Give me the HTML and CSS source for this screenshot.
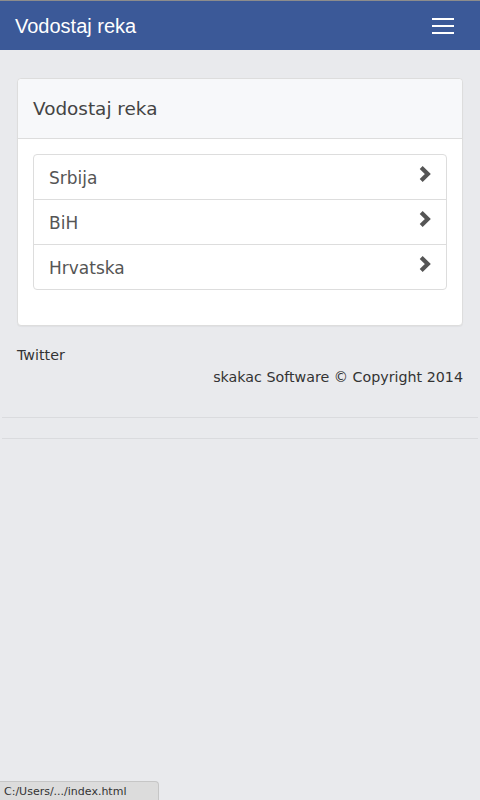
FILE: index.html
```html
<!DOCTYPE html>
<html>
<head>
<meta charset="utf-8">
<title>Vodostaj reka</title>
<link rel="stylesheet" href="styles.css">
</head>
<body>
<header class="topbar">
  <div class="brand">Vodostaj reka</div>
  <button class="menu-btn" aria-label="Menu">
    <span class="bar"></span><span class="bar"></span><span class="bar"></span>
  </button>
</header>
<main class="container">
  <section class="panel">
    <div class="panel-heading">Vodostaj reka</div>
    <div class="panel-body">
      <ul class="list-group">
        <li class="list-item"><span>Srbija</span>
          <svg class="chev" width="12" height="16" viewBox="0 0 12 16"><polyline points="2.2,1.6 8.8,8 2.2,14.4" fill="none" stroke="#555" stroke-width="4.2"/></svg>
        </li>
        <li class="list-item"><span>BiH</span>
          <svg class="chev" width="12" height="16" viewBox="0 0 12 16"><polyline points="2.2,1.6 8.8,8 2.2,14.4" fill="none" stroke="#555" stroke-width="4.2"/></svg>
        </li>
        <li class="list-item"><span>Hrvatska</span>
          <svg class="chev" width="12" height="16" viewBox="0 0 12 16"><polyline points="2.2,1.6 8.8,8 2.2,14.4" fill="none" stroke="#555" stroke-width="4.2"/></svg>
        </li>
      </ul>
    </div>
  </section>
  <footer class="footer">
    <div class="twitter">Twitter</div>
    <div class="copyright">skakac Software © Copyright 2014</div>
  </footer>
</main>
<hr class="rule rule-first">
<hr class="rule">
<div class="status">C:/Users/.../index.html</div>
</body>
</html>
```

FILE: styles.css
```css
html, body {
  margin: 0;
  padding: 0;
}
body {
  background: #e9eaed;
  font-family: "DejaVu Sans", Verdana, sans-serif;
  color: #333;
  min-height: 800px;
  border-top: 1px solid #8c8c8c;
}
.topbar {
  height: 49px;
  background: #3b5998;
  display: flex;
  align-items: center;
  justify-content: space-between;
  padding: 0 26px 0 15px;
}
.brand {
  font-family: "Liberation Sans", Arial, sans-serif;
  font-size: 20px;
  color: #fff;
  line-height: 24px;
}
.menu-btn {
  background: none;
  border: 0;
  padding: 0;
  width: 22px;
  display: flex;
  flex-direction: column;
  gap: 5px;
  margin-top: 1px;
}
.bar {
  display: block;
  width: 22px;
  height: 2px;
  background: #fff;
}
.container {
  padding: 28px 17px 0 17px;
}
.panel {
  background: #fff;
  border: 1px solid #dddddd;
  border-radius: 4px;
  box-shadow: 0 1px 1px rgba(0,0,0,0.04);
}
.panel-heading {
  background: #f7f8fa;
  border-bottom: 1px solid #dddddd;
  border-radius: 4px 4px 0 0;
  height: 59px;
  padding: 0 15px;
  display: flex;
  align-items: center;
  font-size: 18.4px;
  color: #444;
}
.panel-body {
  padding: 15px 15px 35px 15px;
}
.list-group {
  list-style: none;
  margin: 0;
  padding: 0;
  border: 1px solid #dddddd;
  border-radius: 4px;
}
.list-item {
  height: 44px;
  padding: 0 15px;
  display: flex;
  align-items: center;
  justify-content: space-between;
  font-size: 17px;
  color: #555;
  border-top: 1px solid #dddddd;
}
.list-item:first-child {
  border-top: 0;
}
.list-item span {
  margin-top: 2px;
}
.chev {
  display: block;
  margin-top: -6px;
}
.footer {
  padding-top: 19px;
  font-size: 14.25px;
  line-height: 20px;
  color: #333;
}
.copyright {
  text-align: right;
  margin-top: 2px;
}
.rule {
  margin: 0 2px;
  border: 0;
  border-top: 1px solid #dadbde;
  height: 0;
}
.rule-first {
  margin-top: 30px;
  margin-bottom: 20px;
}
.status {
  position: fixed;
  left: 0;
  bottom: 0;
  width: 150px;
  height: 18px;
  padding: 0 4px;
  background: #dcdcdc;
  border: 1px solid #c6c6c6;
  border-left: 0;
  border-bottom: 0;
  border-top-right-radius: 4px;
  font-family: "DejaVu Sans", sans-serif;
  font-size: 11px;
  line-height: 19px;
  color: #333;
}
```
